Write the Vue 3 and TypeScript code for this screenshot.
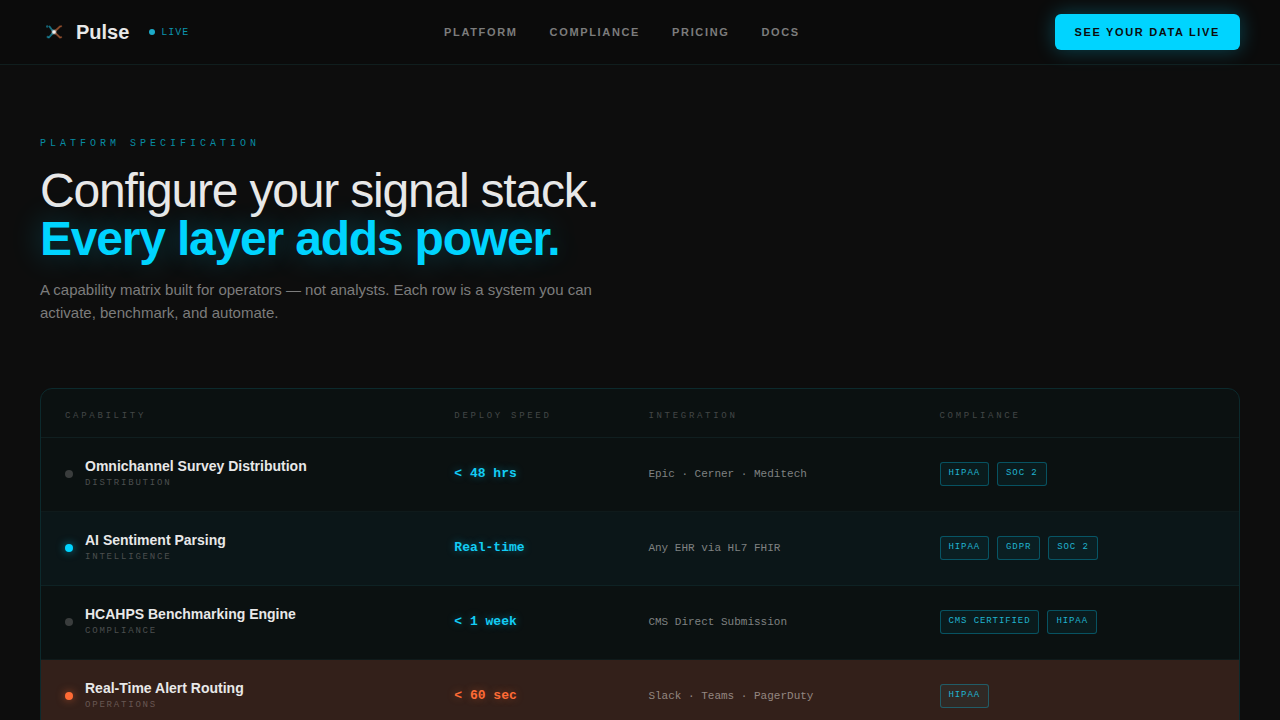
<script setup lang="ts">
type Tone = 'idle' | 'active' | 'alert'

interface Capability {
  name: string
  group: string
  speed: string
  integration: string
  badges: string[]
  tone: Tone
}

const links: string[] = ['Platform', 'Compliance', 'Pricing', 'Docs']
const columns: string[] = ['Capability', 'Deploy Speed', 'Integration', 'Compliance']

const capabilities: Capability[] = [
  {
    name: 'Omnichannel Survey Distribution',
    group: 'Distribution',
    speed: '< 48 hrs',
    integration: 'Epic · Cerner · Meditech',
    badges: ['HIPAA', 'SOC 2'],
    tone: 'idle',
  },
  {
    name: 'AI Sentiment Parsing',
    group: 'Intelligence',
    speed: 'Real-time',
    integration: 'Any EHR via HL7 FHIR',
    badges: ['HIPAA', 'GDPR', 'SOC 2'],
    tone: 'active',
  },
  {
    name: 'HCAHPS Benchmarking Engine',
    group: 'Compliance',
    speed: '< 1 week',
    integration: 'CMS Direct Submission',
    badges: ['CMS Certified', 'HIPAA'],
    tone: 'idle',
  },
  {
    name: 'Real-Time Alert Routing',
    group: 'Operations',
    speed: '< 60 sec',
    integration: 'Slack · Teams · PagerDuty',
    badges: ['HIPAA'],
    tone: 'alert',
  },
]
</script>

<template>
  <div class="page">
    <header class="nav">
      <div class="brand">
        <svg class="logo" viewBox="0 0 28 28" aria-hidden="true">
          <g fill="none" stroke-width="1.8" stroke-linecap="round">
            <path d="M9.500 8.500Q11 11 14 14Q11 17 9 19.500" stroke="#1fb4d4" opacity="0.6" />
            <path d="M20 8.500Q17.500 11 14 14Q17.500 17 20 19.500" stroke="#d8713f" opacity="0.6" />
          </g>
          <g fill="#1fb4d4" opacity="0.5">
            <circle cx="7.200" cy="8.500" r="1.200" />
            <circle cx="7.800" cy="19" r="1.200" />
          </g>
          <g fill="#d8713f" opacity="0.5">
            <circle cx="21.200" cy="8.300" r="1" />
            <circle cx="21.200" cy="19.300" r="1" />
          </g>
          <circle cx="14" cy="14" r="2.800" fill="#e8e8e8" opacity="0.3" />
          <circle cx="14" cy="14" r="1.800" fill="#f0f0f0" />
        </svg>
        <span class="brand-name">Pulse</span>
        <span class="live"><i class="live-dot"></i>Live</span>
      </div>
      <nav class="links">
        <a v-for="link in links" :key="link" href="#">{{ link }}</a>
      </nav>
      <button class="cta" type="button">See your data live</button>
    </header>

    <main class="content">
      <p class="eyebrow">Platform Specification</p>
      <h1 class="headline">
        <span>Configure your signal stack.</span>
        <strong>Every layer adds power.</strong>
      </h1>
      <p class="lead">
        A capability matrix built for operators — not analysts. Each row is a system you can
        activate, benchmark, and automate.
      </p>

      <div class="card">
        <table class="matrix">
          <colgroup>
            <col class="col-name" />
            <col class="col-speed" />
            <col class="col-integration" />
            <col />
          </colgroup>
          <thead>
            <tr>
              <th v-for="column in columns" :key="column" scope="col">{{ column }}</th>
            </tr>
          </thead>
          <tbody>
            <tr v-for="item in capabilities" :key="item.name" :class="item.tone">
              <td>
                <div class="capability">
                  <i class="dot"></i>
                  <div>
                    <div class="name">{{ item.name }}</div>
                    <div class="group">{{ item.group }}</div>
                  </div>
                </div>
              </td>
              <td class="speed">{{ item.speed }}</td>
              <td class="integration">{{ item.integration }}</td>
              <td>
                <div class="badges">
                  <span v-for="badge in item.badges" :key="badge" class="badge">{{ badge }}</span>
                </div>
              </td>
            </tr>
          </tbody>
        </table>
      </div>
    </main>
  </div>
</template>

<style>
html {
  background: #0d0d0d;
}

body {
  height: 100vh;
  overflow: hidden;
}
</style>

<style scoped>
.page {
  --mono: "Liberation Mono", "Courier New", monospace;
  min-height: 100vh;
  background: #0d0d0d;
  color: #e8e8e8;
  font-family: "Liberation Sans", Arial, sans-serif;
}

.nav {
  display: flex;
  align-items: center;
  justify-content: space-between;
  height: 64px;
  padding: 0 40px;
  background: #0b0b0b;
  border-bottom: 1px solid #101e1e;
}

.brand {
  display: flex;
  align-items: center;
}

.logo {
  width: 28px;
  height: 28px;
  margin-right: 8px;
}

.brand-name {
  font-size: 20px;
  font-weight: 700;
  line-height: 24px;
}

.live {
  display: flex;
  align-items: center;
  gap: 6px;
  margin-left: 20px;
  color: #0c94ad;
  font-family: var(--mono);
  font-size: 10px;
  letter-spacing: 0.1em;
  text-transform: uppercase;
}

.live-dot {
  width: 6px;
  height: 6px;
  border-radius: 50%;
  background: #1caac8;
}

.links {
  display: flex;
  gap: 32px;
}

.links a {
  color: #7c7c7c;
  font-size: 11px;
  font-weight: 700;
  letter-spacing: 0.15em;
  text-decoration: none;
  text-transform: uppercase;
}

.cta {
  height: 36px;
  padding: 0 20px;
  border: 0;
  border-radius: 6px;
  background: #00d4ff;
  box-shadow: 0 0 20px rgba(0, 212, 255, 0.3);
  color: #0d0d0d;
  font-family: inherit;
  font-size: 11px;
  font-weight: 700;
  letter-spacing: 0.15em;
  text-transform: uppercase;
}

.content {
  padding: 72px 40px 0;
}

.eyebrow {
  margin: 0 0 16px;
  color: #078ba3;
  font-family: var(--mono);
  font-size: 10px;
  line-height: 14px;
  letter-spacing: 0.4em;
  text-transform: uppercase;
}

.headline {
  margin: 0 0 16px;
  font-size: 48px;
  font-weight: 400;
  line-height: 48px;
  letter-spacing: -0.025em;
}

.headline span,
.headline strong {
  display: block;
}

.headline strong {
  color: #00d4ff;
  font-weight: 700;
  text-shadow: 0 0 30px rgba(0, 212, 255, 0.3);
}

.lead {
  max-width: 560px;
  margin: 0 0 64px;
  color: #7c7c7c;
  font-size: 15px;
  line-height: 1.5;
}

.card {
  overflow: hidden;
  border: 1px solid #0c2a2d;
  border-radius: 12px;
  background: #0b1111;
}

.matrix {
  width: 100%;
  table-layout: fixed;
  border-spacing: 0;
}

.col-name {
  width: 32.5%;
}

.col-speed {
  width: 16.2%;
}

.col-integration {
  width: 24.3%;
}

.matrix th {
  box-sizing: border-box;
  height: 49px;
  padding: 6px 24px 0;
  border-bottom: 1px solid #101f20;
  color: #434747;
  font-family: var(--mono);
  font-size: 9px;
  font-weight: 400;
  letter-spacing: 0.3em;
  text-align: left;
  text-transform: uppercase;
}

.matrix td {
  box-sizing: border-box;
  height: 74px;
  padding: 0 24px 2px;
  border-bottom: 1px solid #0f1a1b;
}

.matrix .active td {
  border-bottom-color: #0e2224;
  background: #0b1618;
}

.matrix .alert td {
  background: #33201a;
}

.capability {
  display: flex;
  align-items: center;
  gap: 12px;
}

.dot {
  flex: none;
  width: 8px;
  height: 8px;
  border-radius: 50%;
  background: #3a3d3d;
}

.active .dot {
  background: #00d4ff;
  box-shadow: 0 0 8px rgba(0, 212, 255, 0.6);
}

.alert .dot {
  background: #ff6b35;
  box-shadow: 0 0 8px rgba(255, 107, 53, 0.6);
}

.name {
  font-size: 14px;
  font-weight: 700;
  line-height: 18px;
}

.group {
  margin: 2px 0;
  color: #4b4f4f;
  font-family: var(--mono);
  font-size: 9px;
  line-height: 12px;
  letter-spacing: 0.2em;
  text-transform: uppercase;
}

.alert .group {
  color: #685752;
}

.speed {
  color: #13cdf5;
  font-family: var(--mono);
  font-size: 13px;
  font-weight: 700;
  text-shadow: 0 0 8px rgba(0, 212, 255, 0.4);
}

.alert .speed {
  color: #ff6b35;
  text-shadow: 0 0 8px rgba(255, 107, 53, 0.4);
}

.integration {
  color: #7f8181;
  font-family: var(--mono);
  font-size: 11px;
}

.alert .integration {
  color: #948781;
}

.badges {
  display: flex;
  gap: 8px;
}

.badge {
  padding: 5px 8px 7px;
  border: 1px solid rgba(0, 212, 255, 0.3);
  border-radius: 3px;
  background: rgba(0, 212, 255, 0.05);
  color: #20b3cf;
  font-family: var(--mono);
  font-size: 9px;
  line-height: 10px;
  letter-spacing: 0.1em;
  text-transform: uppercase;
}
</style>
